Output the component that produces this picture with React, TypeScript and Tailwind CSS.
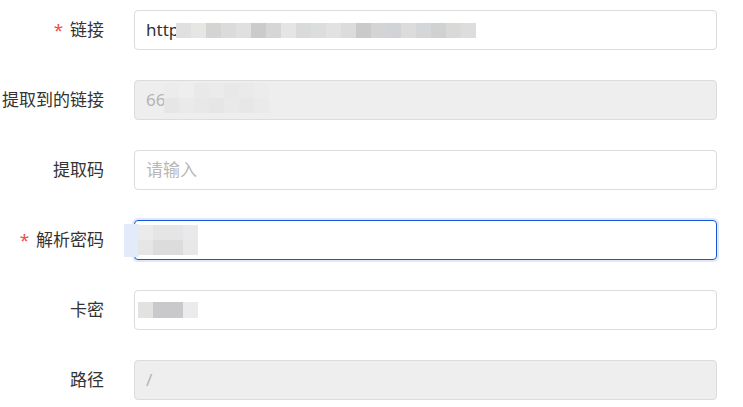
const font = { fontFamily: '"Noto Sans", "Noto Sans CJK SC", sans-serif' }

function Blocks({ rows, w = 15, h = 15 }: { rows: string[][]; w?: number; h?: number }) {
  return (
    <div className="flex flex-col">
      {rows.map((r, i) => (
        <div key={i} className="flex">
          {r.map((c, j) => (
            <div key={j} style={{ width: w, height: h, background: c }} />
          ))}
        </div>
      ))}
    </div>
  )
}

function Label({ text, required }: { text: string; required?: boolean }) {
  return (
    <div className="w-[104px] shrink-0 text-right text-[17px] text-[#333] whitespace-nowrap">
      {required && <span className="text-[#ee4d3f] mr-[7px]">*</span>}
      {text}
    </div>
  )
}

const row1 = [
  ['#dfe0df', '#e6e6e4', '#d4d5d3', '#dadbda', '#e0e0df', '#cacbca', '#d5d6d5', '#e5e5e5', '#d9dadb', '#dcdddd', '#e2e2e1', '#dbdcdb', '#c9cac9', '#d3d4d4', '#d2d3d6', '#dddcda', '#d5d6d8', '#d0d1d3', '#d9d9d8', '#dddddd'],
]
const row2 = [
  ['#ececec', '#eeeeee', '#e9e9e9', '#ebebeb', '#e8e8e8', '#eaeaea', '#ececec'],
  ['#e6e6e6', '#eaeaea', '#e8e8e8', '#e6e6e6', '#e9e9e9', '#e7e7e7', '#eaeaea'],
]

export default function App() {
  return (
    <div className="w-[743px] h-[407px] bg-white pt-[10px] overflow-hidden" style={font}>
      <div className="flex flex-col gap-[30px]">
        <div className="flex items-center">
          <Label text="链接" required />
          <div className="ml-[30px] w-[583px] h-[40px] border border-[#dcdcdc] rounded-[4px] flex items-center pl-[11px] text-[17px] text-[#333]">
            http
            <div className="-ml-[3px]">
              <Blocks rows={row1} />
            </div>
          </div>
        </div>

        <div className="flex items-center">
          <Label text="提取到的链接" />
          <div className="ml-[30px] w-[583px] h-[40px] border border-[#dcdcdc] bg-[#eeeeee] rounded-[4px] flex items-center pl-[11px] text-[17px] text-[#b4b4b4]">
            66
            <div className="-ml-[1px] mt-[-4px]">
              <Blocks rows={row2} />
            </div>
          </div>
        </div>

        <div className="flex items-center">
          <Label text="提取码" />
          <div className="ml-[30px] w-[583px] h-[40px] border border-[#dcdcdc] rounded-[4px] flex items-center pl-[11px] text-[17px] text-[#b8b8b8]">
            请输入
          </div>
        </div>

        <div className="flex items-center">
          <Label text="解析密码" required />
          <div className="relative ml-[30px] w-[583px] h-[40px] border border-[#1556dc] rounded-[4px] shadow-[0_0_0_2px_#dfe8fb] flex items-center pl-[3px]">
            <div className="absolute left-[-11px] top-[3px] w-[15px] h-[33px] bg-[#e3ebfa]" />
            <div className="relative">
              <Blocks
                w={15}
                rows={[
                  ['#ebebeb', '#e5e5e5', '#e5e5e5', '#e9e9eb'],
                  ['#e6e6e6', '#dcdcdc', '#dcdcdc', '#e8e8e8'],
                ]}
              />
            </div>
          </div>
        </div>

        <div className="flex items-center">
          <Label text="卡密" />
          <div className="ml-[30px] w-[583px] h-[40px] border border-[#dcdcdc] rounded-[4px] flex items-center pl-[3px]">
            <Blocks rows={[['#e2e2e1', '#c9c9cb', '#c9c9cb', '#ebebeb']]} w={15} h={16} />
          </div>
        </div>

        <div className="flex items-center">
          <Label text="路径" />
          <div className="ml-[30px] w-[583px] h-[40px] border border-[#dcdcdc] bg-[#eeeeee] rounded-[4px] flex items-center pl-[11px] text-[17px] text-[#b4b4b4]">
            /
          </div>
        </div>
      </div>
    </div>
  )
}
